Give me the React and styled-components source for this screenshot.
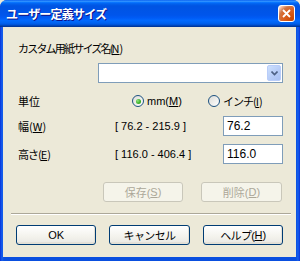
import React from 'react';
import styled, { createGlobalStyle } from 'styled-components';

const GlobalStyle = createGlobalStyle`
  html, body {
    margin: 0;
    padding: 0;
    background: #ece9d8;
  }
`;

const uiFont = `"Liberation Sans", "Noto Sans CJK JP", sans-serif`;

const Window = styled.div`
  width: 300px;
  height: 261px;
  box-sizing: border-box;
  display: flex;
  flex-direction: column;
  border-radius: 7px 7px 0 0;
  overflow: hidden;
  background: linear-gradient(90deg, #0831d9 0, #1660ee 2px, #0a4fdf 4px, #0a4fdf 296px, #1660ee 298px, #0831d9 300px);
  font-family: ${uiFont};
  font-size: 11px;
  color: #000;
`;

const TitleBar = styled.div`
  height: 27px;
  flex-shrink: 0;
  display: flex;
  align-items: center;
  justify-content: space-between;
  padding: 0 5px 0 6px;
  background: linear-gradient(180deg, #0058ee 0%, #3593ff 4%, #288eff 6%, #127dff 8%, #036ffc 10%, #0262ee 14%, #0057e5 20%, #0054e3 24%, #0055eb 56%, #005bf5 66%, #026afe 76%, #0062ef 86%, #0052d6 92%, #0040ab 96%, #003092 100%);
`;

const Title = styled.span`
  color: #fff;
  font-family: "Noto Sans CJK JP", sans-serif;
  font-weight: bold;
  font-size: 12px;
  letter-spacing: -0.8px;
  text-shadow: 1px 1px 0 #0f1089;
  margin-top: -1px;
`;

const CloseButton = styled.div`
  width: 17px;
  height: 17px;
  box-sizing: border-box;
  border: 1px solid #fff;
  border-radius: 3px;
  display: flex;
  align-items: center;
  justify-content: center;
  margin-top: -1px;
  background: radial-gradient(circle at 90% 90%, #cc4600 0%, #dc6527 55%, #cd7546 70%, #ffccb2 90%, #fff 100%);
`;

const Body = styled.div`
  flex: 1;
  margin: 0 4px 4px 3px;
  background: #ece9d8;
  padding: 0 13px 0 15px;
  display: flex;
  flex-direction: column;
`;

const Label = styled.div`
  font-family: "Noto Sans CJK JP", sans-serif;
  letter-spacing: ${({ spacing }) => spacing || 0}px;
  line-height: 14px;
  white-space: nowrap;
`;

const Key = styled.span`
  text-decoration: underline;
  letter-spacing: 0;
`;

const NameLabel = styled(Label)`
  margin-top: 14px;
`;

const ComboRow = styled.div`
  display: flex;
  justify-content: flex-end;
  margin-top: 8px;
`;

const Combo = styled.div`
  width: 185px;
  height: 20px;
  box-sizing: border-box;
  border: 1px solid #7f9db9;
  background: #fff;
  display: flex;
  justify-content: flex-end;
  padding: 1px;
`;

const DropButton = styled.div`
  width: 14px;
  box-sizing: border-box;
  border: 1px solid #b9cdf9;
  border-radius: 2px;
  background: linear-gradient(135deg, #cde0fd 0%, #b5cbf7 60%, #a9c1f3 100%);
  display: flex;
  align-items: center;
  justify-content: center;
`;

const UnitRow = styled.div`
  display: grid;
  grid-template-columns: 114px 76px auto;
  align-items: center;
  height: 14px;
  margin-top: 11px;
`;

const RadioLabel = styled.label`
  display: flex;
  align-items: center;
  gap: 3px;
  white-space: nowrap;
`;

const RadioText = styled.span`
  font-family: ${({ jp }) => (jp ? '"Noto Sans CJK JP", sans-serif' : uiFont)};
  letter-spacing: ${({ jp }) => (jp ? '-1px' : '0')};
  line-height: 14px;
`;

const RadioCircle = styled.span`
  width: 12px;
  height: 12px;
  box-sizing: border-box;
  border-radius: 50%;
  border: 1px solid #1c5180;
  background: linear-gradient(135deg, #dcdcd7 0%, #fff 100%);
  display: flex;
  align-items: center;
  justify-content: center;

  &::after {
    content: '';
    display: ${({ checked }) => (checked ? 'block' : 'none')};
    width: 5px;
    height: 5px;
    border-radius: 50%;
    background: radial-gradient(circle at 35% 35%, #8ee57c 0%, #3fb12c 55%, #21a018 100%);
  }
`;

const FieldRow = styled.div`
  display: grid;
  grid-template-columns: 97px 108px 60px;
  align-items: center;
  margin-top: ${({ gap }) => gap}px;
`;

const Range = styled.span`
  font-family: "Liberation Sans", sans-serif;
  white-space: pre;
  margin-top: -1px;
`;

const NumberInput = styled.div`
  height: 20px;
  box-sizing: border-box;
  border: 1px solid #7f9db9;
  background: #fff;
  padding: 2px 0 0 3px;
  font-family: "Liberation Sans", sans-serif;
  font-size: 12px;
  line-height: 14px;
`;

const ButtonRow = styled.div`
  display: flex;
  gap: ${({ gap }) => gap}px;
  margin-top: ${({ top }) => top}px;
  margin-left: ${({ left }) => left}px;
`;

const Button = styled.div`
  width: ${({ w }) => w}px;
  height: 20px;
  box-sizing: border-box;
  border: 1px solid ${({ disabled }) => (disabled ? '#c9c7ba' : '#003c74')};
  border-radius: 3px;
  display: flex;
  align-items: center;
  justify-content: center;
  font-family: ${uiFont};
  font-size: 11px;
  color: ${({ disabled }) => (disabled ? '#aca899' : '#000')};
  background: ${({ disabled }) =>
    disabled ? '#f5f4ea' : 'linear-gradient(180deg, #fff 0%, #f3f2ec 60%, #ecebe6 86%, #d6d0c5 100%)'};
  box-shadow: ${({ disabled }) => (disabled ? 'none' : 'inset -1px -1px 0 #e3e0d5')};
  white-space: nowrap;
  letter-spacing: ${({ tight }) => (tight ? '-0.6px' : '0')};
`;

const Separator = styled.div`
  height: 0;
  border-top: 1px solid #aca899;
  border-bottom: 1px solid #fff;
  margin: 11px -8px 0 -7px;
`;

const Chevron = () => (
  <svg width="7" height="5" viewBox="0 0 7 5">
    <path d="M0.5 0.5 L3.5 3.5 L6.5 0.5" fill="none" stroke="#4d6185" strokeWidth="1.6" />
  </svg>
);

const CloseIcon = () => (
  <svg width="9" height="9" viewBox="0 0 9 9">
    <path d="M1 1 L8 8 M8 1 L1 8" stroke="#fff" strokeWidth="1.8" />
  </svg>
);

const App = () => (
  <>
    <GlobalStyle />
    <Window>
      <TitleBar>
        <Title>ユーザー定義サイズ</Title>
        <CloseButton>
          <CloseIcon />
        </CloseButton>
      </TitleBar>
      <Body>
        <NameLabel spacing={-1.8}>
          カスタム用紙サイズ名(<Key>N</Key>)
        </NameLabel>
        <ComboRow>
          <Combo>
            <DropButton>
              <Chevron />
            </DropButton>
          </Combo>
        </ComboRow>
        <UnitRow>
          <Label>単位</Label>
          <RadioLabel>
            <RadioCircle checked />
            <RadioText>
              mm(<Key>M</Key>)
            </RadioText>
          </RadioLabel>
          <RadioLabel>
            <RadioCircle />
            <RadioText jp>
              インチ(<Key>I</Key>)
            </RadioText>
          </RadioLabel>
        </UnitRow>
        <FieldRow gap={8}>
          <Label>
            幅(<Key>W</Key>)
          </Label>
          <Range>[ 76.2 - 215.9 ]</Range>
          <NumberInput>76.2</NumberInput>
        </FieldRow>
        <FieldRow gap={8}>
          <Label spacing={-1}>
            高さ(<Key>E</Key>)
          </Label>
          <Range>[ 116.0 - 406.4 ]</Range>
          <NumberInput>116.0</NumberInput>
        </FieldRow>
        <ButtonRow top={18} left={85} gap={18}>
          <Button w={80} disabled>
            保存(<Key>S</Key>)
          </Button>
          <Button w={81} disabled>
            削除(<Key>D</Key>)
          </Button>
        </ButtonRow>
        <Separator />
        <ButtonRow top={10} left={-2} gap={13}>
          <Button w={81}>OK</Button>
          <Button w={81} tight>キャンセル</Button>
          <Button w={81} tight>
            ヘルプ(<Key>H</Key>)
          </Button>
        </ButtonRow>
      </Body>
    </Window>
  </>
);

export default App;
